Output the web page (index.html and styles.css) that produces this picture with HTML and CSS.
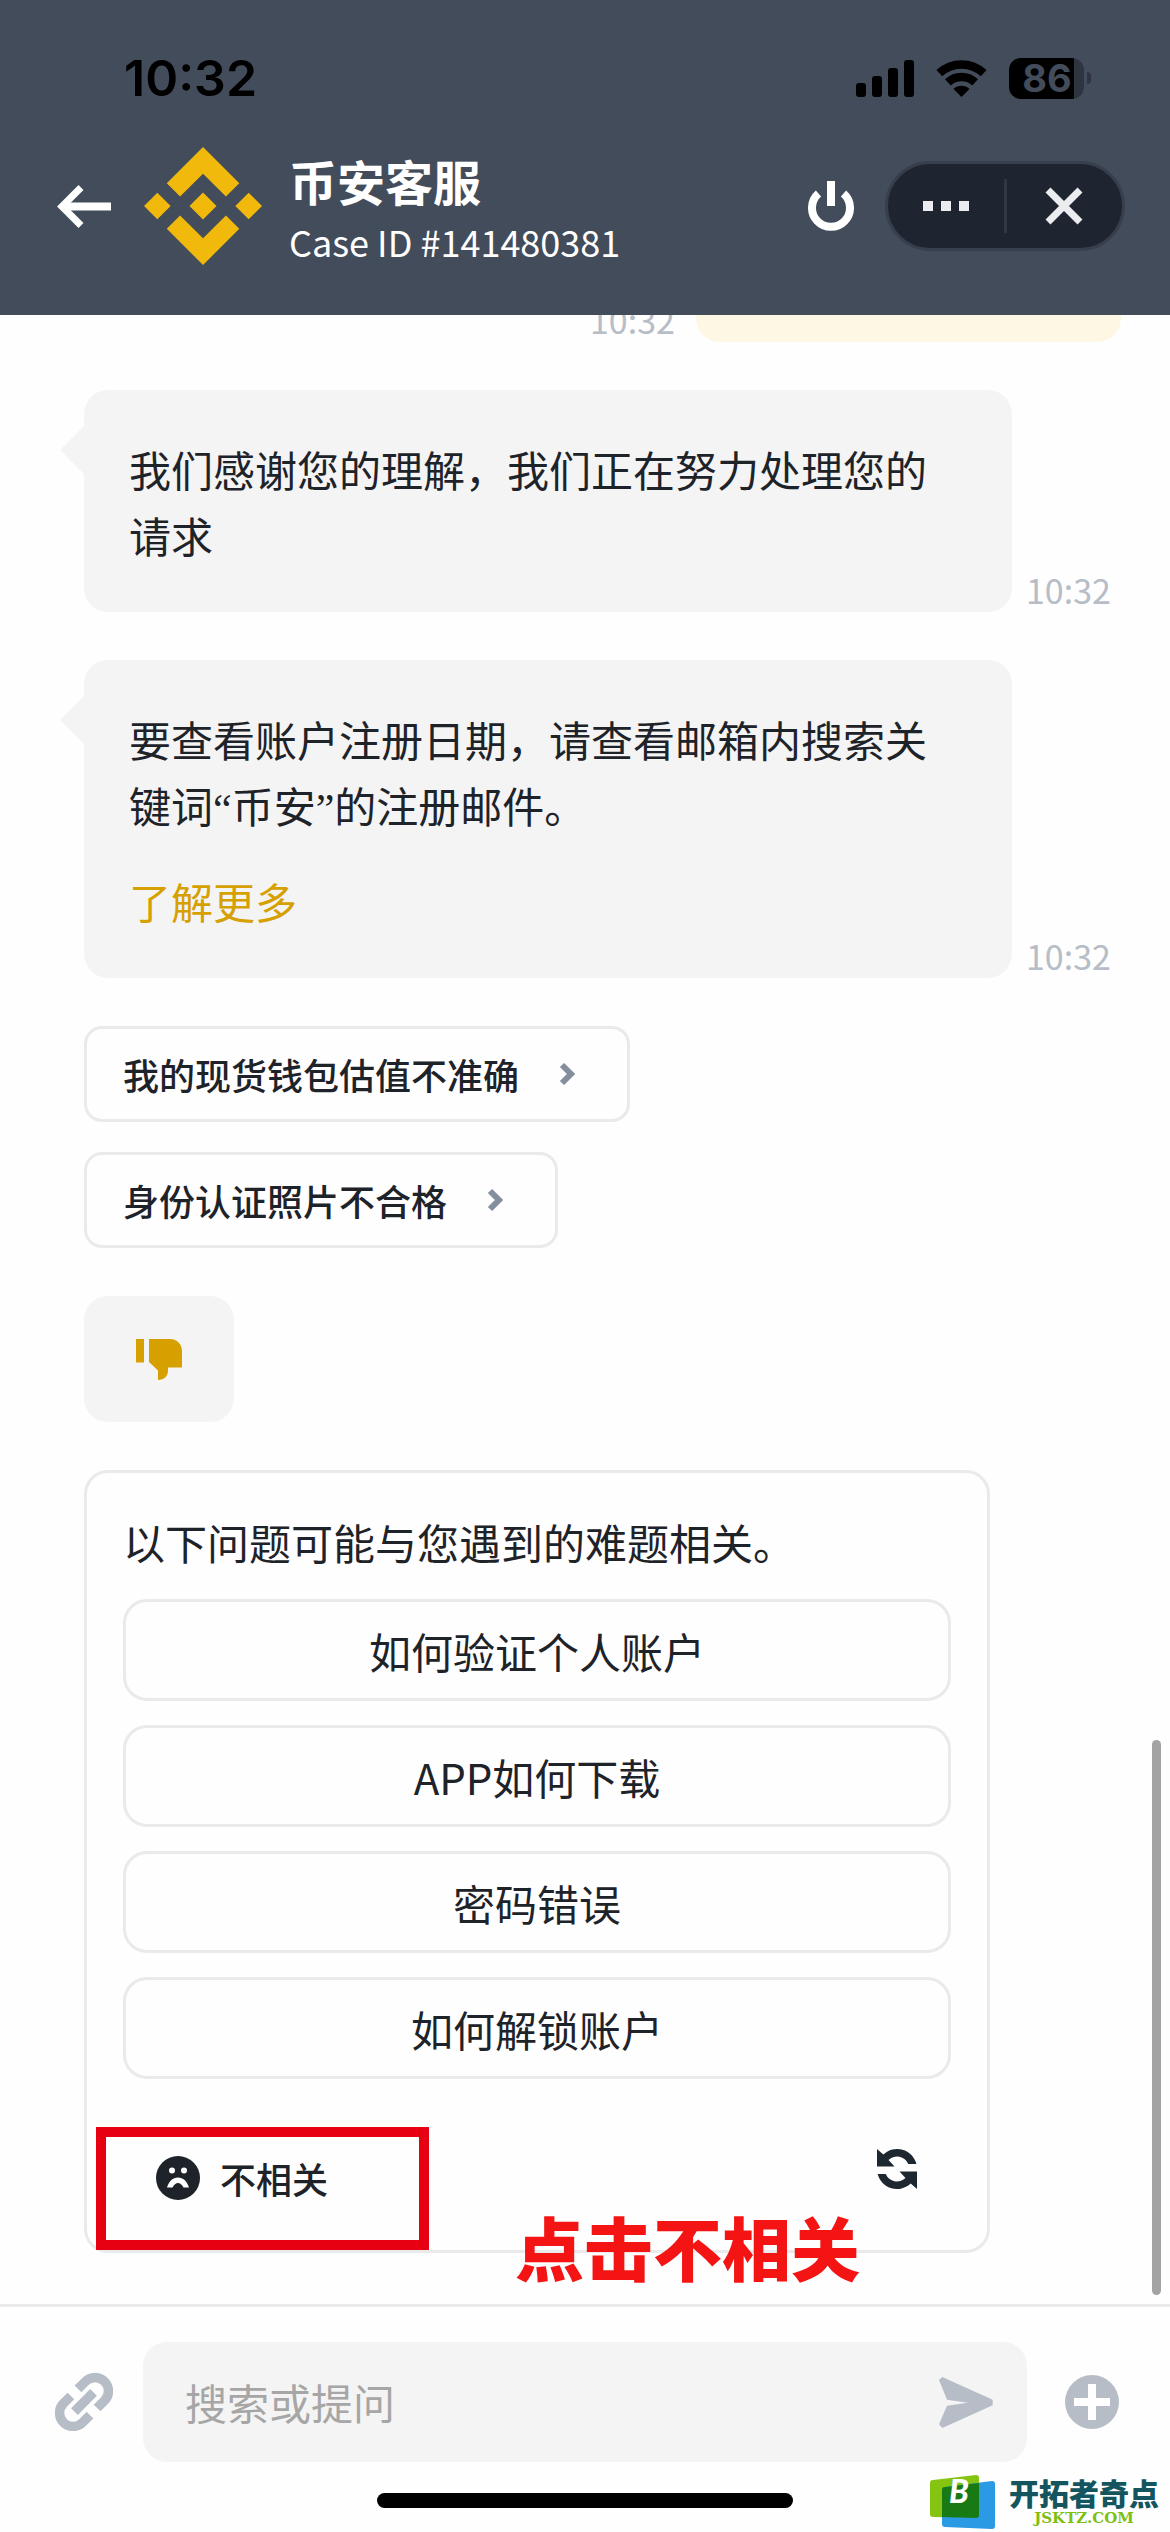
FILE: index.html
```html
<!DOCTYPE html>
<html lang="zh-CN">
<head>
<meta charset="utf-8">
<meta name="viewport" content="width=device-width, initial-scale=1">
<title>币安客服</title>
<link rel="stylesheet" href="styles.css">
</head>
<body>
<div class="app">
  <header class="header">
    <div class="status">
      <time class="clock">10:32</time>
      <div class="indicators">
        <svg width="58" height="37" viewBox="0 0 58 37" aria-hidden="true"><rect y="23" width="10" height="14" rx="3"/><rect x="16" y="16" width="10" height="21" rx="3"/><rect x="32" y="8" width="10" height="29" rx="3"/><rect x="48" width="10" height="37" rx="3"/></svg>
        <svg width="51" height="37" viewBox="0 0 51 37" aria-hidden="true"><g fill="none" stroke="#000" stroke-width="8.5"><path d="M3.3 13.2A32.500 32.500 0 0 1 47.700 13.200"/><path d="M11.900 22.400A20 20 0 0 1 39.100 22.400"/></g><path d="M25.500 37L17.500 29A11.500 11.500 0 0 1 33.500 29Z"/></svg>
        <div class="battery"><span class="battery-level">86</span><i class="battery-cap"></i></div>
      </div>
    </div>
    <div class="nav">
      <button class="icon-btn" aria-label="返回"><svg width="54" height="43" viewBox="0 0 54 43"><g fill="none" stroke="#fff"><path stroke-width="7" d="M24 2.500L5 21.500L24 40.500"/><path stroke-width="8" d="M7 21.500H54"/></g></svg></button>
      <svg class="logo" width="118" height="118" viewBox="0 0 126.610 126.610" aria-hidden="true"><path fill="#f0b90b" d="M38.730 53.200l24.590-24.580 24.600 24.600 14.300-14.310L63.320 0 24.430 38.900zM0 63.310l14.300-14.310 14.310 14.310-14.310 14.300zM38.730 73.410l24.590 24.590 24.600-24.600 14.310 14.290-38.910 38.910-38.910-38.880zM98 63.310l14.300-14.310 14.310 14.300-14.310 14.320zM77.830 63.300L63.320 48.780 48.790 63.300l14.530 14.520z"/></svg>
      <div class="heading">
        <h1 class="title">币安客服</h1>
        <p class="case">Case ID #141480381</p>
      </div>
      <button class="icon-btn" aria-label="结束会话"><svg width="46" height="50" viewBox="0 0 46 50"><g fill="none" stroke="#fff" stroke-width="8"><path d="M23 0V25"/><path d="M10.500 12.500A19 19 0 1 0 35.500 12.500"/></g></svg></button>
      <div class="capsule">
        <button class="capsule-btn" aria-label="更多"><svg width="46" height="10" viewBox="0 0 46 10" fill="#eaecef"><path d="M0 0H10V10H0ZM18 0H28V10H18ZM36 0H46V10H36Z"/></svg></button>
        <button class="capsule-btn" aria-label="关闭"><svg width="38" height="38" viewBox="0 0 38 38"><path d="M3 3L35 35M35 3L3 35" stroke="#eaecef" stroke-width="7"/></svg></button>
      </div>
    </div>
  </header>

  <main class="chat">
    <div class="row row-own">
      <time class="stamp">10:32</time>
      <div class="bubble-own"></div>
    </div>
    <div class="row">
      <div class="bubble"><p>我们感谢您的理解，我们正在努力处理您的请求</p></div>
      <time class="stamp">10:32</time>
    </div>
    <div class="row">
      <div class="bubble">
        <p>要查看账户注册日期，请查看邮箱内搜索关键词<span class="quote">“</span>币安<span class="quote">”</span>的注册邮件。</p>
        <a class="more" href="#more">了解更多</a>
      </div>
      <time class="stamp">10:32</time>
    </div>
    <div class="chips">
      <button class="chip">我的现货钱包估值不准确<svg width="48" height="48" viewBox="0 0 48 48"><path d="M19 15L28 24L19 33"/></svg></button>
      <button class="chip">身份认证照片不合格<svg width="48" height="48" viewBox="0 0 48 48"><path d="M19 15L28 24L19 33"/></svg></button>
    </div>
    <button class="thumb" aria-label="没有帮助"><svg width="46" height="41" viewBox="0 0 46 41" fill="#d6a000"><path d="M0 0H8V23.500H0ZM13 0H34C41 0 46 5 46 12V28.500H32V32C32 37 28 41 22 41V31.500L13 23Z"/></svg></button>
    <section class="card">
      <h2 class="card-title">以下问题可能与您遇到的难题相关。</h2>
      <div class="options">
        <button class="option">如何验证个人账户</button>
        <button class="option">APP如何下载</button>
        <button class="option">密码错误</button>
        <button class="option">如何解锁账户</button>
      </div>
      <div class="card-foot">
        <button class="irrelevant"><svg width="44" height="44" viewBox="0 0 44 44"><circle cx="22" cy="22" r="22" fill="#1e2329"/><g fill="#fff"><circle cx="16" cy="14.500" r="3"/><circle cx="28" cy="14.500" r="3"/><path d="M11 31.500C13 25 17 21.500 22 21.500S31 25 33 31.500H27.500C26 28.500 24 27 22 27S18 28.500 16.500 31.500Z"/></g></svg>不相关</button>
        <button class="refresh" aria-label="换一批"><svg width="40" height="40" viewBox="0 0 40 40" fill="#1e2630"><path id="half" d="M0 0V17.500H17.500L11.500 11A12.300 12.300 0 0 1 31.300 15H39.400A20 20 0 0 0 6.300 5.500Z"/><use href="#half" transform="rotate(180 20 20)"/></svg></button>
      </div>
      <div class="mark"></div>
      <p class="note">点击不相关</p>
    </section>
    <div class="scrollbar"></div>
  </main>

  <footer class="composer">
    <div class="composer-row">
      <button class="icon-btn attach" aria-label="附件"><svg width="58" height="58" viewBox="0 0 58 58"><g transform="translate(29 29) rotate(-45)" fill="none" stroke="#b7bdc6" stroke-width="9.500"><path d="M5 -13.500H15.500A13.500 13.500 0 0 1 15.500 13.500H5"/><path d="M-5 -13.500H-15.500A13.500 13.500 0 0 0 -15.500 13.500H-5"/><path d="M-13.500 0H13.500"/></g></svg></button>
      <div class="field">
        <input class="input" type="text" placeholder="搜索或提问" aria-label="搜索或提问">
        <button class="icon-btn" aria-label="发送"><svg width="54" height="51" viewBox="0 0 54 51" fill="#b7bdc6"><path d="M0 3L3.300 0L53.700 22.700V28.300L3.300 51L0 47.300L8 28.700L29 25.700L8 22.700Z"/></svg></button>
      </div>
      <button class="icon-btn add" aria-label="添加"><svg width="54" height="54" viewBox="0 0 54 54"><circle cx="27" cy="27" r="27" fill="#b7bdc6"/><path d="M27 9V45M9 27H45" stroke="#fff" stroke-width="8"/></svg></button>
    </div>
    <div class="home"></div>
  </footer>

  <div class="brand">
    <svg class="brand-logo" width="65" height="54" viewBox="0 0 65 54" aria-hidden="true"><path fill="#86c412" d="M3 5L46 0Q49 0 49 3V40Q49 43 46 43L3 42Q0 42 0 39V8Q0 5 3 5Z"/><path fill="#2a9ae4" d="M15 12L62 6Q65 6 65 9V51Q65 54 62 54L15 52Q12 52 12 49V15Q12 12 15 12Z"/><path fill="#187a14" d="M15 12L49 8V40Q49 43 46 43L12 42V15Q12 12 15 12Z"/><text class="brand-letter" x="19" y="28">B</text></svg>
    <div class="brand-text"><span class="brand-name">开拓者奇点</span><span class="brand-site">JSKTZ.COM</span></div>
  </div>
</div>
</body>
</html>
```

FILE: styles.css
```css
* { box-sizing: border-box; }

body {
  margin: 0;
  background: #fefefe;
  color: #1e2329;
  font-family: "Noto Sans CJK SC", sans-serif;
}

h1, h2, p { margin: 0; font-weight: 400; }

button {
  margin: 0;
  padding: 0;
  border: 0;
  background: none;
  color: inherit;
  font: inherit;
}

svg { display: block; flex: none; }

.app {
  position: relative;
  display: flex;
  flex-direction: column;
  min-height: 100vh;
}

.icon-btn { display: flex; align-items: center; justify-content: center; }

/* Header */
.header {
  padding: 48px 0 50px;
  background: #434c5a;
  color: #fff;
}

.status {
  display: flex;
  align-items: center;
  justify-content: space-between;
  height: 60px;
  padding: 0 79px 0 124px;
  color: #000;
}

.clock { font: 600 50px/60px Inter, sans-serif; }

.indicators { display: flex; align-items: center; gap: 22px; }

.battery { display: flex; align-items: center; gap: 3px; }

.battery-level {
  width: 75px;
  padding-left: 1px;
  border-radius: 12px;
  background: linear-gradient(90deg, #000 65px, #2f3441 65px);
  color: #434c5a;
  font: 700 38px/41px Inter, sans-serif;
  text-align: center;
}

.battery-cap {
  width: 4px;
  height: 12px;
  border-radius: 0 4px 4px 0;
  background: #2f3441;
}

.nav {
  display: flex;
  align-items: center;
  margin-top: 39px;
  padding: 0 45px 0 57px;
}

.logo { margin-left: 33px; }
.heading { flex: 1; margin-left: 27px; }
.title { font-size: 48px; font-weight: 700; line-height: 66px; }
.case { padding-top: 4px; font-size: 36px; line-height: 48px; }

.capsule {
  display: flex;
  width: 240px;
  height: 90px;
  margin-left: 31px;
  padding: 15px 0;
  border: 3px solid #373f4c;
  border-radius: 45px;
  background: #1f2530;
}

.capsule-btn {
  display: flex;
  flex: 1;
  align-items: center;
  justify-content: center;
}

.capsule-btn + .capsule-btn { border-left: 3px solid #303744; }

/* Conversation */
.chat {
  position: relative;
  display: flex;
  flex: 1;
  flex-direction: column;
  align-items: stretch;
  gap: 48px;
  padding: 0 58px 51px 84px;
}

.row { display: flex; align-items: flex-end; gap: 14px; }

.stamp {
  flex: 0 0 86px;
  color: #b7bdc6;
  font-size: 34px;
  line-height: 44px;
}

.row-own {
  justify-content: flex-end;
  gap: 20px;
  height: 27px;
  margin-right: -9px;
  overflow: hidden;
}

.bubble-own {
  width: 425px;
  height: 96px;
  border-radius: 24px;
  background: #fef7e4;
}

.bubble {
  position: relative;
  display: flex;
  flex: 1;
  flex-direction: column;
  align-items: flex-start;
  gap: 30px;
  padding: 46px 45px 44px;
  border-radius: 24px;
  background: #f4f4f4;
  font-size: 42px;
  line-height: 66px;
}

.bubble::before {
  content: "";
  position: absolute;
  top: 36px;
  left: -24px;
  border: 24px solid transparent;
  border-right-color: #f4f4f4;
  border-left: 0;
}

.quote { font-family: "Liberation Serif", serif; line-height: 1; }

.more { color: #d6a000; text-decoration: none; }

.chips {
  display: flex;
  flex-direction: column;
  align-items: flex-start;
  gap: 30px;
}

.chip {
  display: flex;
  align-items: center;
  gap: 24px;
  height: 96px;
  padding: 0 36px;
  border: 3px solid #eaeaec;
  border-radius: 18px;
  font-size: 36px;
  font-weight: 500;
}

.chip svg { fill: none; stroke: #848e9c; stroke-width: 6; }

.thumb {
  display: flex;
  align-items: center;
  justify-content: center;
  width: 150px;
  height: 126px;
  border-radius: 24px;
  background: #f4f4f4;
}

.card {
  position: relative;
  margin-right: 122px;
  padding: 36px 36px 21px;
  border: 3px solid #eaeaec;
  border-radius: 24px;
}

.card-title { font-size: 42px; line-height: 66px; }

.options {
  display: flex;
  flex-direction: column;
  gap: 24px;
  margin-top: 24px;
}

.option {
  height: 102px;
  border: 3px solid #eaeaec;
  border-radius: 24px;
  font-size: 42px;
}

.card-foot {
  display: flex;
  align-items: flex-start;
  justify-content: space-between;
  margin-top: 48px;
}

.irrelevant {
  display: flex;
  align-items: center;
  gap: 20px;
  height: 102px;
  padding: 0 33px;
  font-size: 36px;
  font-weight: 500;
}

.refresh {
  display: flex;
  align-items: center;
  justify-content: center;
  width: 108px;
  height: 84px;
}

/* Annotations laid over the card */
.mark {
  position: absolute;
  bottom: 0;
  left: 9px;
  width: 333px;
  height: 123px;
  border: 10px solid #e60012;
  pointer-events: none;
}

.note {
  position: absolute;
  bottom: -38px;
  left: 428px;
  color: #f51414;
  font-size: 69px;
  font-weight: 900;
  line-height: 84px;
}

.scrollbar {
  position: absolute;
  right: 9px;
  bottom: 9px;
  width: 9px;
  height: 555px;
  border-radius: 5px;
  background: #a3a3a3;
}

/* Message box */
.composer {
  display: flex;
  flex-direction: column;
  gap: 31px;
  padding: 35px 0 24px;
  border-top: 3px solid #ebebed;
}

.composer-row {
  display: flex;
  align-items: center;
  gap: 29px;
  padding: 0 42px 0 54px;
}

.attach { width: 60px; height: 60px; }
.add { width: 72px; height: 72px; }

.field {
  display: flex;
  flex: 1;
  align-items: center;
  height: 120px;
  padding: 0 34px 0 42px;
  border-radius: 24px;
  background: #f4f4f4;
}

.input {
  flex: 1;
  min-width: 0;
  padding: 0;
  border: 0;
  outline: 0;
  background: none;
  color: #1e2329;
  font: 400 42px/60px "Noto Sans CJK SC", sans-serif;
}

.input::placeholder { color: #a6a6a6; opacity: 1; }

.home {
  align-self: center;
  width: 416px;
  height: 15px;
  border-radius: 8px;
  background: #000;
}

/* Site badge over the bottom corner */
.brand {
  position: absolute;
  right: 11px;
  bottom: 3px;
  display: flex;
  align-items: center;
  gap: 14px;
}

.brand-logo { overflow: visible; }

.brand-letter {
  fill: #fff;
  font: italic 900 32px Lato, sans-serif;
}

.brand-text {
  display: flex;
  flex-direction: column;
  align-items: center;
}

.brand-name {
  color: #14555f;
  font-size: 30px;
  font-weight: 900;
  line-height: 32px;
}

.brand-site {
  color: #80bf10;
  font: 700 15px/20px "DejaVu Serif", serif;
}
```
